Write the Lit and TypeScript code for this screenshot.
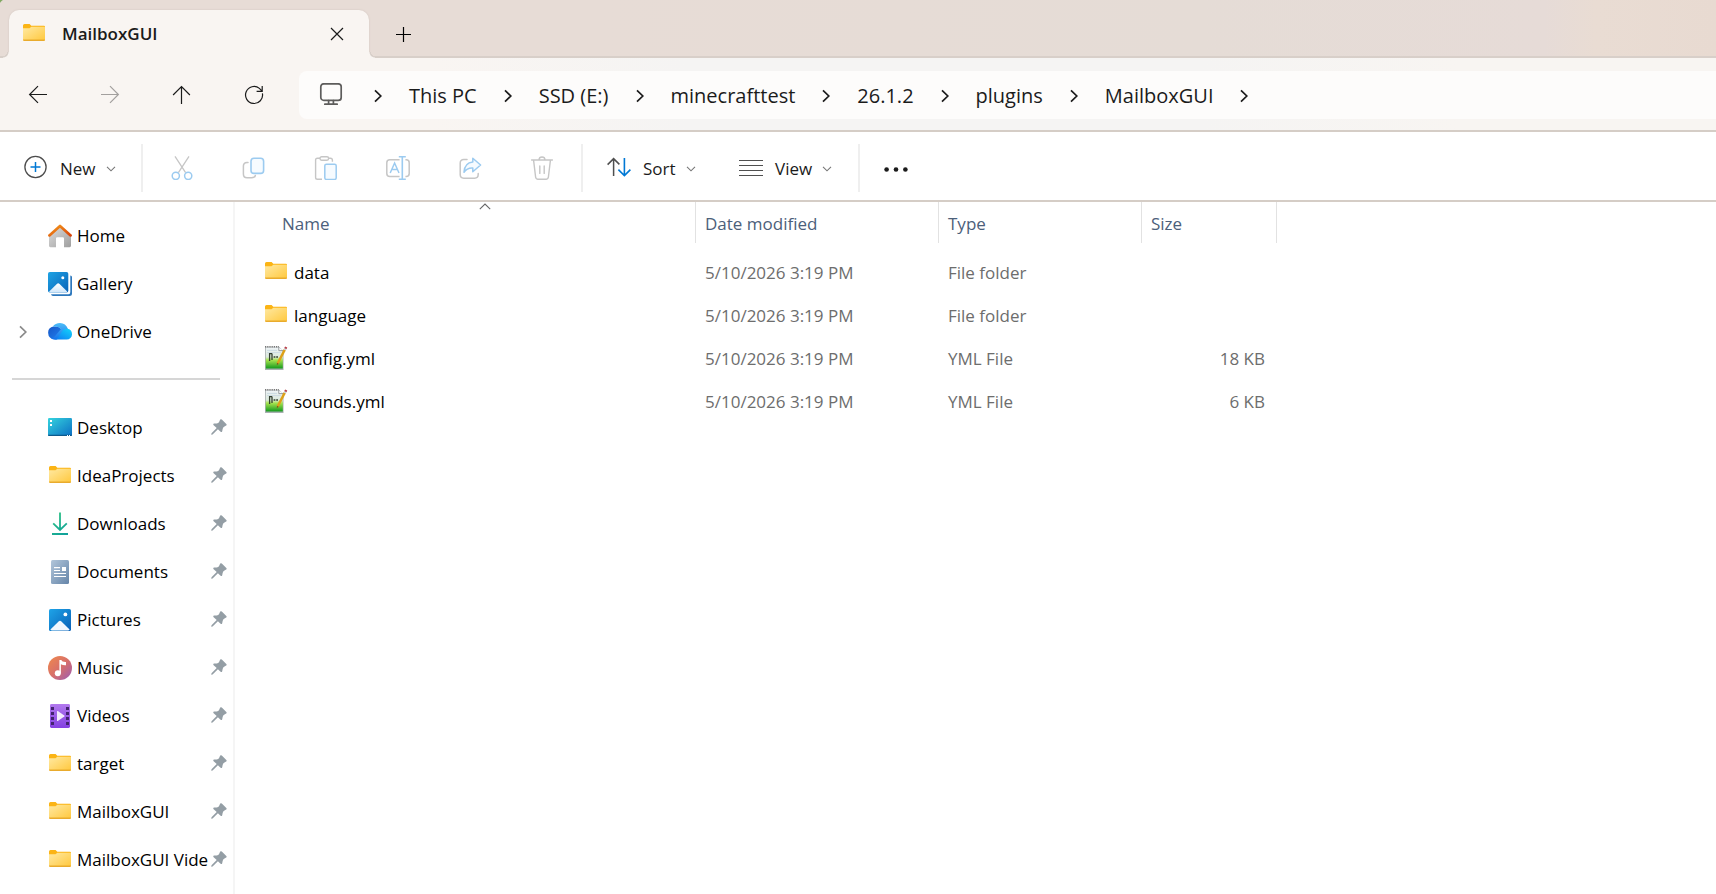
import { LitElement, html, css, TemplateResult } from "lit";
import { customElement, property, state } from "lit/decorators.js";

const icons: Record<string, TemplateResult> = {
  folder: html`<svg width="24" height="24" viewBox="0 0 24 24" aria-hidden="true">
    <defs><linearGradient id="fo" x1="0" y1="0" x2="1" y2="1"><stop offset="0" stop-color="#ffe9a2"/><stop offset="1" stop-color="#ffc83d"/></linearGradient></defs>
    <path d="M1 3.5Q1 2 2.5 2H7.6L9.3 3.8H22Q23 3.8 23 5V7H1Z" fill="#fbb415"/>
    <path d="M1 6.2H7.5L9.3 4.8H22.2Q23 4.8 23 5.4V17.6Q23 18.8 22 18.8H2Q1 18.8 1 17.6Z" fill="url(#fo)"/>
    <path d="M1 17.6H23Q23 19 22 19H2Q1 19 1 17.6Z" fill="#e9ab2d"/></svg>`,
  home: html`<svg width="24" height="24" viewBox="0 0 24 24" aria-hidden="true">
    <defs><linearGradient id="hb" x1="0" y1="0" x2="1" y2="1"><stop offset="0" stop-color="#dedede"/><stop offset="1" stop-color="#9f9f9f"/></linearGradient>
    <linearGradient id="hr" x1="0" y1="0" x2="1" y2="1"><stop offset="0" stop-color="#f59a1b"/><stop offset="1" stop-color="#d8430b"/></linearGradient></defs>
    <path d="M1 11L12 2L23 11V21.8Q23 23.2 21.6 23.2H16V14.5Q16 13.2 14.8 13.2H9.2Q8 13.2 8 14.5V23.2H2.4Q1 23.2 1 21.8Z" fill="url(#hb)"/>
    <path d="M1.4 11.4L12 1.9L22.6 11.4" fill="none" stroke="url(#hr)" stroke-width="2.7" stroke-linecap="round" stroke-linejoin="round"/></svg>`,
  gallery: html`<svg width="24" height="24" viewBox="0 0 24 24" aria-hidden="true">
    <defs><linearGradient id="ga" x1="0" y1="0" x2="1" y2="1"><stop offset="0" stop-color="#1fa3e4"/><stop offset="1" stop-color="#0a63b8"/></linearGradient>
    <linearGradient id="gm" x1="0" y1="0" x2="0" y2="1"><stop offset="0" stop-color="#fff"/><stop offset="1" stop-color="#cfe6fa"/></linearGradient></defs>
    <path d="M3 22.3H20.5Q22.3 22.3 22.3 20V3.6Q24 3.8 24 5V21.5Q24 24 21.5 24H5Q3.4 24 3 22.3Z" fill="#2d78bd"/>
    <rect width="20.3" height="20.6" rx="1.8" fill="url(#ga)"/>
    <path d="M1.2 19.4L8.8 11.9Q10.2 10.7 11.6 11.9L19.2 19.4Q18.6 20.6 17.8 20.6H2.6Q1.6 20.6 1.2 19.4Z" fill="url(#gm)"/>
    <circle cx="14.8" cy="5.7" r="1.5" fill="#fff"/></svg>`,
  onedrive: html`<svg width="24" height="24" viewBox="0 0 24 24" aria-hidden="true">
    <defs><linearGradient id="o1" x1="0" y1="0" x2="1" y2="1"><stop offset="0" stop-color="#1557c8"/><stop offset="1" stop-color="#2382f0"/></linearGradient>
    <linearGradient id="o2" x1="0" y1="0" x2="0" y2="1"><stop offset="0" stop-color="#4dbdf8"/><stop offset="1" stop-color="#1672ea"/></linearGradient>
    <linearGradient id="o3" x1="1" y1="0" x2="0" y2="1"><stop offset="0" stop-color="#14d6fb"/><stop offset="1" stop-color="#0c76f2"/></linearGradient></defs>
    <path d="M6.3 19.5A6.2 6.2 0 0 1 .2 13.2A6 6 0 0 1 6.4 6.4Q13 6 15 12L9 19.5Z" fill="url(#o1)"/>
    <path d="M4.6 6.7Q7.4 3 12 3Q17.8 3 20 9L16 12L9.4 18.8Q7 20 3.2 18.4Q6 17.8 7.6 15.4L13 9Q10 6 4.6 6.7Z" fill="url(#o2)"/>
    <path d="M6 19.4Q9 19 10.6 16.5L13.6 12Q15.6 8.7 19.4 8.8A5.4 5.4 0 0 1 24 14.2A5.3 5.3 0 0 1 18.6 19.6Z" fill="url(#o3)"/></svg>`,
  desktop: html`<svg width="24" height="24" viewBox="0 0 24 24" aria-hidden="true">
    <defs><linearGradient id="de" x1="0" y1="0" x2="1" y2="1"><stop offset="0" stop-color="#35d4de"/><stop offset="1" stop-color="#0c6fc4"/></linearGradient></defs>
    <rect y="2" width="24" height="18" rx="1.2" fill="url(#de)"/><path d="M0 18.8H24V19Q24 20 23 20H1Q0 20 0 19Z" fill="#0d5a8c"/>
    <path d="M2 4h2v2H2zM2 8h2v2H2z" fill="#fff"/><path d="M19 19h1v1h-1zM21 19h1v1h-1z" fill="#fff"/></svg>`,
  downloads: html`<svg width="24" height="24" viewBox="0 0 24 24" aria-hidden="true">
    <defs><linearGradient id="dl" gradientUnits="userSpaceOnUse" x1="4" y1="1" x2="20" y2="23"><stop offset="0" stop-color="#2fc481"/><stop offset="1" stop-color="#0e9f9c"/></linearGradient></defs>
    <path d="M12 .4V18M5.2 11.4L12 18L18.8 11.4M4 22H20" fill="none" stroke="url(#dl)" stroke-width="1.8"/></svg>`,
  documents: html`<svg width="24" height="24" viewBox="0 0 24 24" aria-hidden="true">
    <defs><linearGradient id="dc" x1="0" y1="0" x2="1" y2="1"><stop offset="0" stop-color="#b2c6da"/><stop offset="1" stop-color="#6585a9"/></linearGradient></defs>
    <rect x="3" width="18" height="24" rx="1.5" fill="url(#dc)"/>
    <path d="M6 7.6H12M6 10.5H12M6 13.5H18M6 16.5H18" stroke="#fff" stroke-width="1.2"/><rect x="14" y="7" width="4" height="4" fill="#fff"/></svg>`,
  pictures: html`<svg width="24" height="24" viewBox="0 0 24 24" aria-hidden="true">
    <defs><linearGradient id="pi" x1="0" y1="0" x2="1" y2="1"><stop offset="0" stop-color="#1ea4e8"/><stop offset="1" stop-color="#0a60b6"/></linearGradient></defs>
    <rect x="1" y="1" width="22" height="22" rx="1.6" fill="url(#pi)"/>
    <path d="M2.4 21.6L10.6 13.4Q12 12.2 13.4 13.4L21.6 21.6Q21 22.6 20 22.6H4Q3 22.6 2.4 21.6Z" fill="#f2f8fe"/><circle cx="17.4" cy="6.4" r="1.9" fill="#fff"/></svg>`,
  music: html`<svg width="24" height="24" viewBox="0 0 24 24" aria-hidden="true">
    <defs><linearGradient id="mu" x1="0" y1="0" x2="1" y2="1"><stop offset="0" stop-color="#f08a4b"/><stop offset=".5" stop-color="#d8706a"/><stop offset="1" stop-color="#9a5bb5"/></linearGradient></defs>
    <circle cx="12" cy="12" r="12" fill="url(#mu)"/>
    <circle cx="9.8" cy="17.2" r="3" fill="#fff"/><path d="M11.4 4H13.2Q14 6.2 18 6V9.2Q15 9.4 12.9 8.2V17.2H11.4Z" fill="#fff"/></svg>`,
  videos: html`<svg width="24" height="24" viewBox="0 0 24 24" aria-hidden="true">
    <defs><linearGradient id="vi" x1="0" y1="0" x2="0" y2="1"><stop offset="0" stop-color="#b279ee"/><stop offset="1" stop-color="#8440e2"/></linearGradient></defs>
    <rect x="2" width="20" height="24" rx="1.4" fill="url(#vi)"/>
    <path d="M3 3h3v3H3zM3 8h3v3H3zM3 13h3v3H3zM3 18h3v3H3zM18 3h3v3h-3zM18 8h3v3h-3zM18 13h3v3h-3zM18 18h3v3h-3z" fill="#43236f"/>
    <path d="M9 7.5Q9 6.6 9.8 7.1L16.3 11.4Q16.9 11.9 16.3 12.4L9.8 16.9Q9 17.4 9 16.5Z" fill="#f4ecfd"/></svg>`,
  notepad: html`<svg width="24" height="24" viewBox="0 0 24 24" aria-hidden="true">
    <defs><linearGradient id="np" x1="0" y1="0" x2="0" y2="1"><stop offset="0" stop-color="#eef3f6"/><stop offset=".45" stop-color="#dbe9dc"/><stop offset=".6" stop-color="#a6e34e"/><stop offset="1" stop-color="#159a1e"/></linearGradient></defs>
    <path d="M1 .8H15L19.5 5V24H1Z" fill="#aab0b2"/><path d="M1.8 1.6H14.6L18.8 5.4V22.4H1.8Z" fill="url(#np)"/>
    <path d="M1 .8H15" stroke="#777" stroke-width="1.4" stroke-dasharray="1.2 1"/>
    <path d="M14.8 1.2V4.6H19" fill="#fff" stroke="#8c9396" stroke-width=".9"/>
    <path d="M3 4.4H13M3 6.6H17" stroke="#c4d4df" stroke-width=".8"/>
    <path d="M5.6 7V15M8 7.6V14M5.6 7.6H8M9.6 11H11.4M12.2 11H14" stroke="#33402f" stroke-width="1.3" fill="none"/>
    <path d="M13.6 17.6L20.8 3.6" stroke="#dda018" stroke-width="2.4"/><path d="M20.6 4L21.6 2.2" stroke="#cdd4da" stroke-width="2.4"/><path d="M21.4 2.6L22.2 1" stroke="#b8404a" stroke-width="2.4"/><path d="M12.8 19.2L13 16.8L14.8 17.8Z" fill="#7a5a20"/></svg>`,
  pin: html`<svg width="16" height="16" viewBox="0 0 16 16" aria-hidden="true">
    <path d="M9.2 .6Q10 -.2 10.8 .6L15.3 5Q16 5.8 15.2 6.5Q14 7 12.2 8.6Q11.6 9.6 11.2 12.2Q10.8 13.6 9.6 12.8L6.9 10.2L1.6 15.4L.2 15.8L.5 14.3L5.7 9L2.4 5.9Q1.9 4.8 3.2 4.5Q5.6 4.6 7.2 3.9Q8.4 3 9.2 .6Z" fill="#949ea5"/></svg>`,
  back: html`<svg width="20" height="20" viewBox="0 0 20 20" aria-hidden="true"><path d="M19 9.5H1.6M10 1.1L1.6 9.5L10 17.9" fill="none" stroke="currentColor" stroke-width="1.2"/></svg>`,
  forward: html`<svg width="20" height="20" viewBox="0 0 20 20" aria-hidden="true"><path d="M1 9.5H18.4M10 1.1L18.4 9.5L10 17.9" fill="none" stroke="currentColor" stroke-width="1.2"/></svg>`,
  up: html`<svg width="20" height="20" viewBox="0 0 20 20" aria-hidden="true"><path d="M9.5 19V1.6M1.1 10L9.5 1.6L17.9 10" fill="none" stroke="currentColor" stroke-width="1.2"/></svg>`,
  refresh: html`<svg width="20" height="20" viewBox="0 0 20 20" aria-hidden="true"><path d="M18.4 8.4A8.5 8.5 0 1 1 15.4 3.4L17.8 5.8M18.2 1V6.4H12.6" fill="none" stroke="currentColor" stroke-width="1.2"/></svg>`,
  monitor: html`<svg width="24" height="24" viewBox="0 0 24 24" aria-hidden="true"><g fill="none" stroke="#5d5c5b" stroke-width="1.7" stroke-linecap="round"><rect x="1.8" y=".8" width="20.4" height="16.6" rx="3"/><path d="M9.6 17.6V21M14.4 17.6V21M5.8 21.2H18.2"/></g></svg>`,
  crumb: html`<svg width="8" height="14" viewBox="0 0 8 14" aria-hidden="true"><path d="M1 1.4L6.8 7L1 12.6" fill="none" stroke="currentColor" stroke-width="1.7"/></svg>`,
  down: html`<svg class="down" width="10" height="6" viewBox="0 0 10 6" aria-hidden="true"><path d="M1 .8L5 4.8L9 .8" fill="none" stroke="#777" stroke-width="1.1"/></svg>`,
  caret: html`<svg width="12" height="7" viewBox="0 0 12 7" aria-hidden="true"><path d="M.8 6.2L6 1L11.2 6.2" fill="none" stroke="#666" stroke-width="1.1"/></svg>`,
  close: html`<svg width="14" height="14" viewBox="0 0 14 14" aria-hidden="true"><path d="M1 1L13 13M13 1L1 13" fill="none" stroke="currentColor" stroke-width="1.2"/></svg>`,
  plus: html`<svg width="16" height="16" viewBox="0 0 16 16" aria-hidden="true"><path d="M8.5 1V16M1 8.5H16" fill="none" stroke="currentColor" stroke-width="1.2"/></svg>`,
  create: html`<svg width="24" height="24" viewBox="0 0 24 24" aria-hidden="true"><circle cx="11.5" cy="12" r="10.6" fill="none" stroke="#4d4d4d" stroke-width="1.3"/><path d="M11.5 7V17M6.5 12H16.5" stroke="#0078d4" stroke-width="1.5"/></svg>`,
  cut: html`<svg width="24" height="24" viewBox="0 0 24 24" aria-hidden="true"><path d="M5 .4L15.6 16.6M19 .4L8.4 16.6" stroke="#c6c6c6" stroke-width="1.3"/><g fill="none" stroke="#9ccbf0" stroke-width="1.5"><circle cx="5.8" cy="19.8" r="3.6"/><circle cx="18.2" cy="19.8" r="3.6"/></g></svg>`,
  copy: html`<svg width="24" height="24" viewBox="0 0 24 24" aria-hidden="true"><path d="M6 6.4H5Q1.4 6.6 1.4 10V18Q1.4 21.8 5 21.8H9.6Q13 21.8 13.4 19.4" fill="none" stroke="#c6c6c6" stroke-width="1.5" stroke-linecap="round"/><rect x="9" y="2.2" width="12.6" height="15.2" rx="3" fill="#f6fbff" stroke="#9ccbf0" stroke-width="1.6"/></svg>`,
  paste: html`<svg width="24" height="24" viewBox="0 0 24 24" aria-hidden="true"><g fill="none" stroke="#c6c6c6" stroke-width="1.4"><path d="M6 2.2H3.4Q1.6 2.2 1.6 4V21.4Q1.6 23.2 3.4 23.2H8M14.6 2.2H16.4Q18.4 2.2 18.4 4V5.8"/><rect x="6" y=".8" width="8.6" height="3.4" rx="1.6"/></g><rect x="10.8" y="8.2" width="11.4" height="15.2" rx="1.6" fill="#f6fbff" stroke="#9ccbf0" stroke-width="1.5"/></svg>`,
  rename: html`<svg width="24" height="24" viewBox="0 0 24 24" aria-hidden="true"><path d="M13.6 3.8H3.8Q.8 3.8 .8 6.8V17.6Q.8 20.6 3.8 20.6H13.6M19.4 3.8H20.2Q23.2 3.8 23.2 6.8V17.6Q23.2 20.6 20.2 20.6H19.4" fill="none" stroke="#c6c6c6" stroke-width="1.5"/><path d="M12.8 .7H19.8M12.8 23.3H19.8M16.3 .7V23.3" stroke="#9ccbf0" stroke-width="1.6"/><path d="M4.2 17L8.6 7L13 17M5.6 13.6H11.6" fill="none" stroke="#9ccbf0" stroke-width="1.5"/></svg>`,
  share: html`<svg width="24" height="24" viewBox="0 0 24 24" aria-hidden="true"><path d="M9 3.6H5.8Q2.2 3.6 2.2 7V18.6Q2.2 22.2 5.8 22.2H16.6Q20.2 22.2 20.2 18.6V17.4" fill="none" stroke="#c6c6c6" stroke-width="1.5" stroke-linecap="round"/><path d="M14.8 2.2L22.6 9L14.8 15.8V12Q9.2 11.6 6 16.2Q6.6 6.8 14.8 6Z" fill="#f6fbff" stroke="#9ccbf0" stroke-width="1.5" stroke-linejoin="round"/></svg>`,
  trash: html`<svg width="24" height="24" viewBox="0 0 24 24" aria-hidden="true"><g fill="none" stroke="#c6c6c6" stroke-width="1.4" stroke-linecap="round"><path d="M1.6 4H22.4M3.6 4.4L5.6 21Q5.9 23.2 8 23.2H16Q18.1 23.2 18.4 21L20.4 4.4M9 3.8Q9.2 1 12 1Q14.8 1 15 3.8M9.8 10V17.4M14.2 10V17.4"/></g></svg>`,
  sort: html`<svg width="24" height="24" viewBox="0 0 24 24" aria-hidden="true"><path d="M6.6 21V4M.6 9.6L6.6 3.6L12.4 9.4" fill="none" stroke="#4f4f4f" stroke-width="1.5"/><path d="M17.4 3V20.4M11.4 14.6L17.4 20.6L23.4 14.6" fill="none" stroke="#0078d4" stroke-width="1.6"/></svg>`,
  view: html`<svg width="24" height="24" viewBox="0 0 24 24" aria-hidden="true"><path d="M0 5.5H24M0 10.5H24M0 15.5H24M0 20.5H24" stroke="#505050" stroke-width="1.2"/></svg>`,
  more: html`<svg width="24" height="24" viewBox="0 0 24 24" aria-hidden="true"><g fill="#1b1b1b"><circle cx="2.6" cy="13.5" r="2.3"/><circle cx="12" cy="13.5" r="2.3"/><circle cx="21.4" cy="13.5" r="2.3"/></g></svg>`,
};

const reset = css`
  * { box-sizing: border-box; }
  button {
    display: flex; align-items: center; justify-content: center;
    border: 0; padding: 0; margin: 0; background: none;
    font: inherit; color: inherit; text-align: left;
  }
  a { color: inherit; text-decoration: none; }
  svg { display: block; flex: none; }
`;

@customElement("tab-strip")
class TabStrip extends LitElement {
  @property() label = "";
  static styles = [reset, css`
    :host {
      display: flex; height: 58px; padding: 10px 0 0 9px;
      background:
        radial-gradient(circle at 8px 8px, transparent 9px, #7fa860 10px) 0 0 / 5px 3px no-repeat,
        linear-gradient(90deg, #e7dcd6 0, #e7dcd6 35%, #e5dcd6 70%, #e6dbd7 90%, #e9dcd3 93%, #e8dad1 100%);
      box-shadow: inset 0 -2px #d8cfc9;
    }
    .tab {
      position: relative; display: flex; align-items: center; width: 360px; padding: 0 25px 0 13px;
      border-radius: 10px 10px 0 0; background: #f9f5f2; color: #1b1b1b;
      box-shadow: 0 0 2px #cfc3bd; clip-path: inset(-3px -6px 0 -6px);
    }
    .tab::before, .tab::after { content: ""; position: absolute; bottom: 0; width: 6px; height: 6px; }
    .tab::before { left: -6px; background: radial-gradient(circle at 0 0, transparent 4px, #d8cfc9 4px, #d8cfc9 5px, #f9f5f2 6px); }
    .tab::after { right: -6px; background: radial-gradient(circle at 100% 0, transparent 4px, #d8cfc9 4px, #d8cfc9 5px, #f9f5f2 6px); }
    .label { flex: 1; margin-left: 16px; font-size: 17px; font-weight: 600; line-height: 24px; }
    .add { width: 68px; }
  `];
  render() {
    return html`
      <div class="tab">${icons.folder}<span class="label">${this.label}</span>
        <button aria-label="Close tab">${icons.close}</button></div>
      <button class="add" aria-label="New tab">${icons.plus}</button>`;
  }
}

@customElement("address-bar")
class AddressBar extends LitElement {
  @property({ attribute: false }) path: string[] = [];
  static styles = [reset, css`
    :host {
      display: flex; height: 74px; padding: 13px 0 11px 2px; color: #1b1b1b;
      background: linear-gradient(90deg, #f9f5f2 25%, #f5f4f3 40%, #f5f4f3 70%, #f8f5f2 85%);
      border-bottom: 2px solid #d5cdc6;
    }
    .nav { width: 72px; }
    .nav:disabled { color: #a3a09e; }
    .crumbs {
      display: flex; align-items: center; flex: 1; margin-left: 9px; padding: 2px 0 0 20px;
      background: #fdfcfb; border-radius: 8px 0 0 8px;
      font-size: 20px; line-height: 28px; white-space: nowrap;
    }
    .device { display: flex; margin-right: 4px; padding-bottom: 2px; }
    .sep { width: 62px; }
  `];
  render() {
    return html`
      <button class="nav" aria-label="Back">${icons.back}</button>
      <button class="nav" aria-label="Forward" disabled>${icons.forward}</button>
      <button class="nav" aria-label="Up">${icons.up}</button>
      <button class="nav" aria-label="Refresh">${icons.refresh}</button>
      <nav class="crumbs" aria-label="Path">
        <span class="device">${icons.monitor}</span><button class="sep" aria-label="Expand">${icons.crumb}</button>
        ${this.path.map((p) => html`<a href="#">${p}</a><button class="sep" aria-label="Expand ${p}">${icons.crumb}</button>`)}
      </nav>`;
  }
}

@customElement("command-bar")
class CommandBar extends LitElement {
  static styles = [reset, css`
    :host {
      display: flex; height: 70px; padding: 12px 0 8px; color: #1b1b1b; background: #fff;
      border-bottom: 2px solid #d5cdc6; font-size: 17px; line-height: 24px;
    }
    .menu { justify-content: flex-start; padding: 0 0 2px 24px; }
    .new { width: 141px; }
    .sort { width: 156px; }
    .view { width: 119px; padding-left: 0; }
    .menu span { margin-left: 12px; padding-top: 3px; }
    .down { margin: 3px 0 0 10px; }
    .rule { width: 2px; background: #efefef; }
    .tools { display: flex; padding: 0 3px; }
    .tool { width: 72px; }
  `];
  render() {
    const tools = ["cut", "copy", "paste", "rename", "share", "trash"];
    return html`
      <button class="menu new">${icons.create}<span>New</span>${icons.down}</button>
      <div class="rule"></div>
      <div class="tools">${tools.map((t) => html`<button class="tool" aria-label=${t} disabled>${icons[t]}</button>`)}</div>
      <div class="rule"></div>
      <button class="menu sort">${icons.sort}<span>Sort</span>${icons.down}</button>
      <button class="menu view">${icons.view}<span>View</span>${icons.down}</button>
      <div class="rule"></div>
      <button class="tool" aria-label="See more">${icons.more}</button>`;
  }
}

interface Place { icon: string; label: string; }

@customElement("side-nav")
class SideNav extends LitElement {
  static styles = [reset, css`
    :host { display: block; padding-top: 10px; border-right: 2px solid #f5f5f5; color: #000; font-size: 17px; line-height: 24px; }
    .row { display: flex; align-items: center; height: 48px; padding: 0 6px 0 17px; }
    .twist { width: 12px; margin-right: 19px; color: #8a8a8a; }
    .place { display: flex; align-items: center; flex: 1; min-width: 0; }
    .label { flex: 1; margin-left: 5px; white-space: nowrap; }
    .pin { width: 16px; margin-left: 2px; padding-bottom: 2px; }
    .split { height: 48px; padding: 22px 13px 0 12px; }
    .split hr { height: 2px; margin: 0; border: 0; background: #d6d6d6; }
  `];
  top: Place[] = [
    { icon: "home", label: "Home" }, { icon: "gallery", label: "Gallery" }, { icon: "onedrive", label: "OneDrive" },
  ];
  pinned: Place[] = [
    { icon: "desktop", label: "Desktop" }, { icon: "folder", label: "IdeaProjects" },
    { icon: "downloads", label: "Downloads" }, { icon: "documents", label: "Documents" },
    { icon: "pictures", label: "Pictures" }, { icon: "music", label: "Music" },
    { icon: "videos", label: "Videos" }, { icon: "folder", label: "target" },
    { icon: "folder", label: "MailboxGUI" }, { icon: "folder", label: "MailboxGUI Vide" },
  ];
  row(p: Place, pinned: boolean) {
    return html`<div class="row">
      ${p.icon === "onedrive" ? html`<button class="twist" aria-label="Expand OneDrive">${icons.crumb}</button>` : html`<span class="twist"></span>`}
      <a class="place" href="#">${icons[p.icon]}<span class="label">${p.label}</span></a>
      ${pinned ? html`<button class="pin" aria-label="Unpin ${p.label}">${icons.pin}</button>` : ""}
    </div>`;
  }
  render() {
    return html`${this.top.map((p) => this.row(p, false))}
      <div class="split"><hr></div>
      ${this.pinned.map((p) => this.row(p, true))}`;
  }
}

@customElement("file-list")
class FileList extends LitElement {
  static styles = [reset, css`
    :host { display: block; color: #6d6d6d; font-size: 17px; line-height: 24px; }
    table { border-collapse: separate; border-spacing: 0; table-layout: fixed; width: 1042px; }
    .name { width: 461px; }
    .date { width: 243px; }
    .type { width: 203px; }
    .size { width: 135px; }
    th { height: 41px; padding: 2px 0 0 9px; border-right: 1px solid #e2e2e2; color: #4c607a; font-weight: 400; text-align: left; }
    th.name { position: relative; padding-left: 47px; }
    .caret { position: absolute; top: 1px; left: 39px; right: 0; display: flex; justify-content: center; }
    td { height: 43px; padding: 0 0 0 9px; white-space: nowrap; }
    td.name { padding-left: 29px; }
    td.size { padding-right: 12px; text-align: right; }
    .gap td { height: 8px; }
    .file { display: flex; align-items: center; gap: 6px; color: #000; }
    .file svg { margin-bottom: 2px; }
  `];
  @state() files = [
    { icon: "folder", name: "data", type: "File folder", size: "" },
    { icon: "folder", name: "language", type: "File folder", size: "" },
    { icon: "notepad", name: "config.yml", type: "YML File", size: "18 KB" },
    { icon: "notepad", name: "sounds.yml", type: "YML File", size: "6 KB" },
  ];
  render() {
    return html`<table>
      <thead><tr>
        <th class="name" aria-sort="ascending"><span class="caret">${icons.caret}</span><button>Name</button></th>
        <th class="date"><button>Date modified</button></th>
        <th class="type"><button>Type</button></th>
        <th class="size"><button>Size</button></th>
      </tr></thead>
      <tbody><tr class="gap" aria-hidden="true"><td colspan="4"></td></tr>
        ${this.files.map((f) => html`<tr>
          <td class="name"><a class="file" href="#">${icons[f.icon]}<span>${f.name}</span></a></td>
          <td>5/10/2026 3:19 PM</td><td>${f.type}</td><td class="size">${f.size}</td></tr>`)}
      </tbody></table>`;
  }
}

@customElement("app-root")
class AppRoot extends LitElement {
  static styles = css`
    :host {
      display: flex; flex-direction: column; min-height: 100vh; background: #fff;
      font-family: "Segoe UI", "Open Sans", "Noto Sans", sans-serif;
    }
    .body { display: flex; flex: 1; }
    side-nav { flex: none; width: 235px; box-sizing: border-box; }
    file-list { flex: 1; min-width: 0; }
    tab-strip, address-bar, command-bar { box-sizing: border-box; }
  `;
  path = ["This PC", "SSD (E:)", "minecrafttest", "26.1.2", "plugins", "MailboxGUI"];
  render() {
    return html`
      <tab-strip label="MailboxGUI"></tab-strip>
      <address-bar .path=${this.path}></address-bar>
      <command-bar></command-bar>
      <div class="body"><side-nav></side-nav><file-list></file-list></div>`;
  }
}
